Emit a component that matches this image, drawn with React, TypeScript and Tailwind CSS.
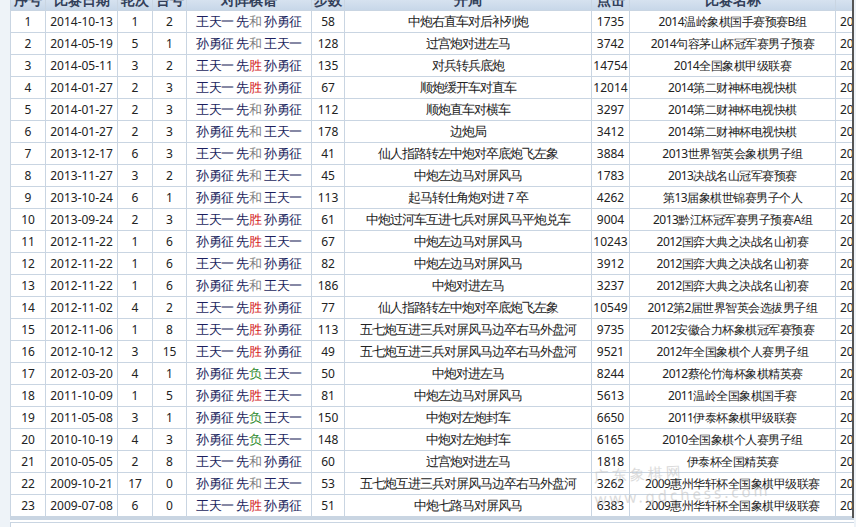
import React from "react";

type R = [string, string, string, string, string, string, string, string, string, string, string];
const rows: R[] = [
  ["1","2014-10-13","1","2","王天一","和","孙勇征","58","中炮右直车对后补列炮","1735","2014温岭象棋国手赛预赛B组"],
  ["2","2014-05-19","5","1","孙勇征","和","王天一","128","过宫炮对进左马","3742","2014句容茅山杯冠军赛男子预赛"],
  ["3","2014-05-11","3","2","王天一","胜","孙勇征","135","对兵转兵底炮","14754","2014全国象棋甲级联赛"],
  ["4","2014-01-27","2","3","王天一","胜","孙勇征","67","顺炮缓开车对直车","12014","2014第二财神杯电视快棋"],
  ["5","2014-01-27","2","3","王天一","和","孙勇征","112","顺炮直车对横车","3297","2014第二财神杯电视快棋"],
  ["6","2014-01-27","2","3","孙勇征","和","王天一","178","边炮局","3412","2014第二财神杯电视快棋"],
  ["7","2013-12-17","6","3","王天一","和","孙勇征","41","仙人指路转左中炮对卒底炮飞左象","3884","2013世界智英会象棋男子组"],
  ["8","2013-11-27","3","2","孙勇征","和","王天一","45","中炮左边马对屏风马","1783","2013决战名山冠军赛预赛"],
  ["9","2013-10-24","6","1","孙勇征","和","王天一","113","起马转仕角炮对进７卒","4262","第13届象棋世锦赛男子个人"],
  ["10","2013-09-24","2","3","王天一","胜","孙勇征","61","中炮过河车互进七兵对屏风马平炮兑车","9004","2013黔江杯冠军赛男子预赛A组"],
  ["11","2012-11-22","1","6","孙勇征","胜","王天一","67","中炮左边马对屏风马","10243","2012国弈大典之决战名山初赛"],
  ["12","2012-11-22","1","6","王天一","和","孙勇征","82","中炮左边马对屏风马","3912","2012国弈大典之决战名山初赛"],
  ["13","2012-11-22","1","6","孙勇征","和","王天一","186","中炮对进左马","3237","2012国弈大典之决战名山初赛"],
  ["14","2012-11-02","4","2","王天一","胜","孙勇征","77","仙人指路转左中炮对卒底炮飞左象","10549","2012第2届世界智英会选拔男子组"],
  ["15","2012-11-06","1","8","王天一","胜","孙勇征","113","五七炮互进三兵对屏风马边卒右马外盘河","9735","2012安徽合力杯象棋冠军赛预赛"],
  ["16","2012-10-12","3","15","王天一","胜","孙勇征","49","五七炮互进三兵对屏风马边卒右马外盘河","9521","2012年全国象棋个人赛男子组"],
  ["17","2012-03-20","4","1","孙勇征","负","王天一","50","中炮对进左马","8244","2012蔡伦竹海杯象棋精英赛"],
  ["18","2011-10-09","1","5","孙勇征","胜","王天一","81","中炮左边马对屏风马","5613","2011温岭全国象棋国手赛"],
  ["19","2011-05-08","3","1","孙勇征","负","王天一","150","中炮对左炮封车","6650","2011伊泰杯象棋甲级联赛"],
  ["20","2010-10-19","4","3","孙勇征","负","王天一","148","中炮对左炮封车","6165","2010全国象棋个人赛男子组"],
  ["21","2010-05-05","2","8","王天一","和","孙勇征","60","过宫炮对进左马","1818","伊泰杯全国精英赛"],
  ["22","2009-10-21","17","0","孙勇征","和","王天一","53","五七炮互进三兵对屏风马边卒右马外盘河","3262","2009惠州华轩杯全国象棋甲级联赛"],
  ["23","2009-07-08","6","0","王天一","胜","孙勇征","51","中炮七路马对屏风马","6383","2009惠州华轩杯全国象棋甲级联赛"],
];

const resColor: Record<string, string> = { 和: "text-[#808080]", 胜: "text-[#d42020]", 负: "text-[#2e8b2e]" };

const td = "border border-[#c9d5e2] text-center whitespace-nowrap overflow-hidden p-0 h-[22px]";
const num = "font-['DejaVu_Sans',sans-serif] text-[12px] text-[#222]";
const cn = "font-['Noto_Sans_CJK_SC','Noto_Sans',sans-serif] text-[13px] tracking-[-1px] text-[#222]";

export default function App() {
  return (
    <div className="relative w-[856px] h-[527px] overflow-hidden bg-[#eef3f8]">
      <div className="ml-[10px] -mt-[12px] w-[900px] bg-white">
        <table className="table-fixed border-collapse w-[900px]">
          <colgroup>
            <col className="w-[35px]" />
            <col className="w-[72px]" />
            <col className="w-[35px]" />
            <col className="w-[34px]" />
            <col className="w-[125px]" />
            <col className="w-[33px]" />
            <col className="w-[247px]" />
            <col className="w-[38px]" />
            <col className="w-[206px]" />
            <col className="w-[75px]" />
          </colgroup>
          <thead>
            <tr className="bg-gradient-to-b from-[#e6eef7] to-[#c6d6e8]">
              {["序号","比赛日期","轮次","台号","对阵棋谱","步数","开局","点击","比赛名称",""].map((h, i) => (
                <th key={i} className={`${td} font-['Noto_Sans_CJK_SC',sans-serif] text-[14px] font-bold text-[#33405a]`}>{h}</th>
              ))}
            </tr>
          </thead>
          <tbody>
            {rows.map((r) => (
              <tr key={r[0]}>
                <td className={`${td} ${num}`}>{r[0]}</td>
                <td className={`${td} ${num}`}>{r[1]}</td>
                <td className={`${td} ${num}`}>{r[2]}</td>
                <td className={`${td} ${num}`}>{r[3]}</td>
                <td className={`${td} font-['Noto_Sans_CJK_SC',sans-serif] text-[13px] tracking-[-0.5px] text-[#1c1f5e]`}>
                  {r[4]} 先<span className={resColor[r[5]]}>{r[5]}</span> {r[6]}
                </td>
                <td className={`${td} ${num}`}>{r[7]}</td>
                <td className={`${td} ${cn}`}>{r[8]}</td>
                <td className={`${td} ${num}`}>{r[9]}</td>
                <td className={`${td} font-['Noto_Sans_CJK_SC',sans-serif] text-[12px] tracking-[-0.5px] text-[#222]`}>{r[10]}</td>
                <td className={`${td} ${num} text-left pl-[4px]`}>2014</td>
              </tr>
            ))}
          </tbody>
        </table>
        <div className="h-[3px] bg-[#c9d5e2]" />
        <div className="h-[20px] border border-[#c9d5e2] bg-white mt-[2px]" />
      </div>
      <div className="absolute top-0 right-[2px] w-[2px] h-[518px] bg-[#555]" />
      <div className="absolute right-0 top-0 w-[2px] h-full bg-[#eef3f8]" />
      <div className="absolute left-[594px] top-[458px] -rotate-[3deg] font-['Noto_Sans_CJK_SC',sans-serif] text-[15px] tracking-[3px] text-[#c4c4c4] opacity-60 pointer-events-none">
        广东象棋网 www.gdchess.com
      </div>
    </div>
  );
}
